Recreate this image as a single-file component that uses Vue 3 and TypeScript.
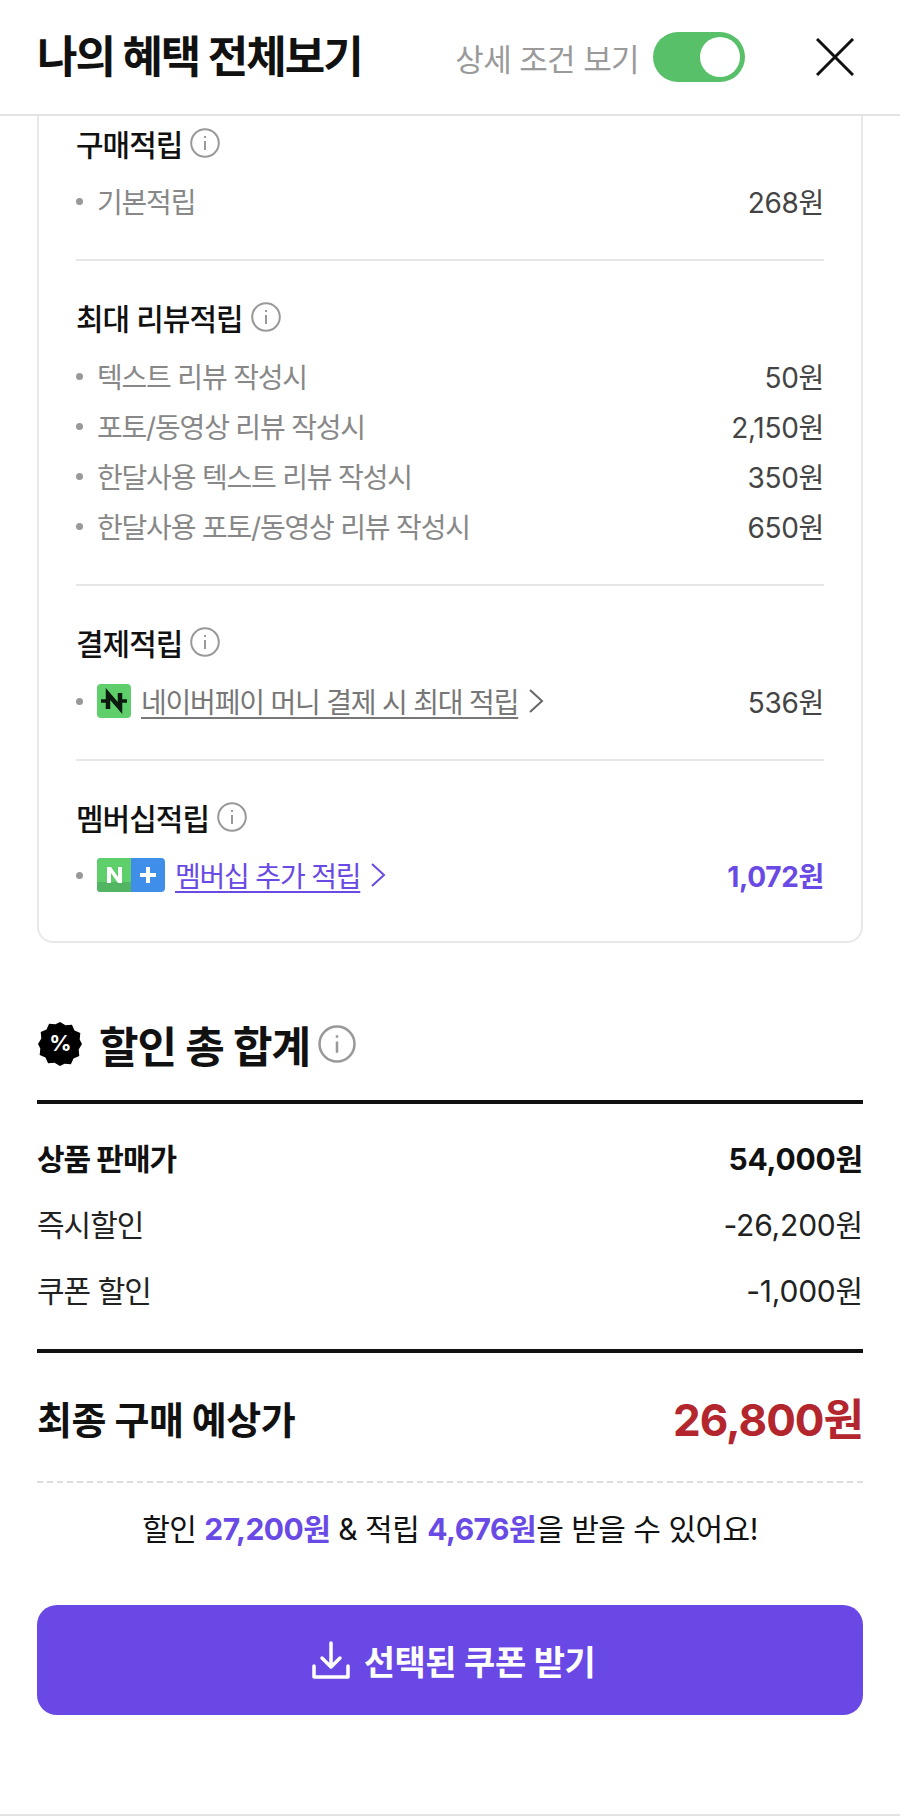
<script setup lang="ts">
interface Row { label: string; value: string }
const reviewRows: Row[] = [
  { label: '텍스트 리뷰 작성시', value: '50원' },
  { label: '포토/동영상 리뷰 작성시', value: '2,150원' },
  { label: '한달사용 텍스트 리뷰 작성시', value: '350원' },
  { label: '한달사용 포토/동영상 리뷰 작성시', value: '650원' },
]
</script>

<template>
  <div class="page">
    <header class="header">
      <h1 class="title">나의 혜택 전체보기</h1>
      <span class="toggle-label">상세 조건 보기</span>
      <span class="toggle"><span class="knob"></span></span>
      <svg class="close" width="38" height="38" viewBox="0 0 38 38" fill="none" stroke="#111" stroke-width="3"><path d="M1 1L37 37M37 1L1 37" /></svg>
    </header>

    <main class="content">
      <section class="card">
        <div class="group first">
          <h2 class="group-title">구매적립<svg class="info" viewBox="0 0 30 30"><circle cx="15" cy="15" r="13.8" /><path d="M15 13v9M15 8v2" /></svg></h2>
          <div class="row"><span class="dot"></span><span class="label">기본적립</span><span class="value">268원</span></div>
        </div>
        <div class="group">
          <h2 class="group-title">최대 리뷰적립<svg class="info" viewBox="0 0 30 30"><circle cx="15" cy="15" r="13.8" /><path d="M15 13v9M15 8v2" /></svg></h2>
          <div v-for="r in reviewRows" :key="r.label" class="row"><span class="dot"></span><span class="label">{{ r.label }}</span><span class="value">{{ r.value }}</span></div>
        </div>
        <div class="group">
          <h2 class="group-title">결제적립<svg class="info" viewBox="0 0 30 30"><circle cx="15" cy="15" r="13.8" /><path d="M15 13v9M15 8v2" /></svg></h2>
          <div class="row">
            <span class="dot"></span>
            <svg class="badge" width="34" height="34" viewBox="0 0 34 34"><rect width="34" height="34" rx="4" fill="#5fcf6c" /><path d="M4 17h7M23 17h7" fill="none" stroke="#0b1a0e" stroke-width="3.500" /><path d="M11 25V10l12 14V9" fill="none" stroke="#0b1a0e" stroke-width="4.500" /></svg>
            <a class="link gray">네이버페이 머니 결제 시 최대 적립</a>
            <svg class="chev" width="16" height="26" viewBox="0 0 16 26" fill="none" stroke="#666" stroke-width="2"><path d="M2 2l12 11L2 24" /></svg>
            <span class="value">536원</span>
          </div>
        </div>
        <div class="group last">
          <h2 class="group-title">멤버십적립<svg class="info" viewBox="0 0 30 30"><circle cx="15" cy="15" r="13.8" /><path d="M15 13v9M15 8v2" /></svg></h2>
          <div class="row">
            <span class="dot"></span>
            <svg class="badge" width="68" height="34" viewBox="0 0 68 34"><rect width="68" height="34" rx="4" fill="#3f8fe8" /><path d="M4 0h30v34H4a4 4 0 0 1-4-4V4a4 4 0 0 1 4-4z" fill="#5fcf6c" /><path d="M0 24h34v10H4a4 4 0 0 1-4-4z" fill="#52b561" /><path d="M10 25V9h4l7 10V9h4v16h-4l-7-10v10z" fill="#fff" /><path d="M51 9v16M43 17h16" stroke="#fff" stroke-width="4" fill="none" /></svg>
            <a class="link purple">멤버십 추가 적립</a>
            <svg class="chev" width="16" height="26" viewBox="0 0 16 26" fill="none" stroke="#6a4ae4" stroke-width="2"><path d="M2 2l12 11L2 24" /></svg>
            <span class="value strong-purple">1,072원</span>
          </div>
        </div>
      </section>

      <section class="summary">
        <h2 class="summary-title">
          <svg class="pct" width="46" height="46" viewBox="0 0 46 46">
            <path d="M23 1l5.5 3.3 6.4-.6 2.6 5.8 5.8 2.6-.6 6.4L45 23l-3.300 5.500.6 6.400-5.800 2.600-2.600 5.800-6.400-.6L23 45l-5.500-3.300-6.400.6-2.600-5.800-5.800-2.600.6-6.400L1 23l3.300-5.500-.6-6.400 5.800-2.600 2.600-5.800 6.400.6z" fill="#000" />
            <text x="23" y="30" text-anchor="middle" class="pct-text">%</text>
          </svg>
          <span>할인 총 합계</span>
          <svg class="info big" viewBox="0 0 30 30"><circle cx="15" cy="15" r="13.8" /><path d="M15 13v9M15 8v2" /></svg>
        </h2>
        <div class="price-table">
          <div class="price-row bold"><span>상품 판매가</span><span>54,000원</span></div>
          <div class="price-row"><span>즉시할인</span><span>-26,200원</span></div>
          <div class="price-row"><span>쿠폰 할인</span><span>-1,000원</span></div>
        </div>
        <div class="final"><span>최종 구매 예상가</span><span class="final-price">26,800원</span></div>
        <p class="note">할인 <b>27,200원</b> &amp; 적립 <b>4,676원</b>을 받을 수 있어요!</p>
        <button class="cta" type="button">
          <svg width="38" height="38" viewBox="0 0 38 38" fill="none" stroke="#fff" stroke-width="3.500" stroke-linecap="round" stroke-linejoin="round"><path d="M19 2v24M10 17l9 9 9-9M2 25v11h34V25" /></svg>
          <span>선택된 쿠폰 받기</span>
        </button>
      </section>
    </main>
    <div class="bottom-line"></div>
  </div>
</template>

<style scoped>
.page {
  width: 900px;
  height: 1816px;
  overflow: hidden;
  background: #fff;
  display: flex;
  flex-direction: column;
  font-family: "Inter", "Noto Sans CJK KR", "Noto Sans", sans-serif;
  color: #111;
  letter-spacing: -0.5px;
}
.header {
  height: 116px;
  flex: none;
  box-sizing: border-box;
  display: flex;
  align-items: center;
  padding: 0 37px;
  border-bottom: 2px solid #e3e3e3;
}
.title {
  margin: 0;
  flex: 1;
  font-size: 44px;
  font-weight: 700;
  letter-spacing: -2px;
  line-height: 1;
}
.toggle-label {
  font-size: 31px;
  color: #9a9a9a;
  letter-spacing: -0.6px;
  margin-right: 14px;
}
.toggle {
  width: 92px;
  height: 50px;
  border-radius: 25px;
  background: #58c069;
  display: flex;
  align-items: center;
  justify-content: flex-end;
  padding-right: 5px;
  box-sizing: border-box;
}
.knob {
  width: 40px;
  height: 40px;
  border-radius: 50%;
  background: #fff;
}
.close {
  margin-left: 71px;
  margin-right: 9px;
}
.content {
  flex: 1;
  padding: 0 37px;
}
.card {
  border: 2px solid #e8e8e8;
  border-top: 0;
  border-radius: 0 0 16px 16px;
  padding: 0 37px 0 37px;
  height: 827px;
  box-sizing: border-box;
}
.group {
  padding: 36px 0 33px;
  border-top: 2px solid #e6e6e6;
}
.group.first {
  border-top: 0;
  padding: 7px 0 33px;
}
.group.first .group-title {
  margin-bottom: 13px;
}
.group.last {
  padding-bottom: 0;
}
.group-title {
  margin: 0 0 14px;
  height: 40px;
  display: flex;
  align-items: center;
  font-size: 30px;
  font-weight: 500;
  letter-spacing: -1px;
}
.group.last .group-title {
  margin-bottom: 13px;
}
.info {
  width: 30px;
  height: 30px;
  margin-left: 8px;
  fill: none;
  stroke: #999;
  stroke-width: 2;
}
.info.big {
  width: 38px;
  height: 38px;
  margin-left: 8px;
}
.row {
  height: 50px;
  display: flex;
  align-items: center;
  font-size: 28px;
  letter-spacing: -1.2px;
}
.dot {
  width: 7px;
  height: 7px;
  border-radius: 50%;
  background: #999;
  margin-right: 14px;
  flex: none;
}
.label {
  color: #888;
  flex: 1;
}
.value {
  margin-left: auto;
  color: #444;
  letter-spacing: -0.3px;
}
.badge {
  flex: none;
  margin-right: 10px;
}
.link {
  text-decoration: underline;
  text-underline-offset: 4px;
}
.link.gray { color: #777; }
.link.purple { color: #6a4ae4; }
.chev { margin-left: 10px; flex: none; }
.strong-purple {
  color: #6a4ae4;
  font-weight: 700;
}
.summary {
  padding-top: 71px;
}
.summary-title {
  margin: 0;
  height: 60px;
  display: flex;
  align-items: center;
  font-size: 43px;
  font-weight: 700;
  letter-spacing: -1px;
}
.pct { margin-right: 16px; flex: none; }
.pct-text {
  fill: #fff;
  font-size: 22px;
  font-weight: 700;
}
.price-table {
  margin-top: 26px;
  padding: 20px 0 27px;
  border-top: 4px solid #111;
  border-bottom: 4px solid #111;
}
.price-row {
  height: 66px;
  display: flex;
  justify-content: space-between;
  align-items: center;
  font-size: 30px;
  color: #222;
}
.price-row span:first-child {
  letter-spacing: -1px;
}
.price-row span:last-child {
  letter-spacing: -0.2px;
}
.price-row.bold {
  font-weight: 700;
  color: #111;
}
.final {
  height: 130px;
  box-sizing: border-box;
  display: flex;
  justify-content: space-between;
  align-items: center;
  font-size: 38px;
  font-weight: 700;
  border-bottom: 2px dashed #ddd;
}
.final-price {
  color: #b3262e;
  font-size: 44px;
  letter-spacing: -1px;
}
.note {
  margin: 0;
  height: 88px;
  display: flex;
  align-items: center;
  justify-content: center;
  white-space: pre-wrap;
  font-size: 30px;
  color: #111;
}
.note b {
  color: #6a4ae4;
  font-weight: 700;
}
.cta {
  margin-top: 34px;
  width: 100%;
  height: 110px;
  border: 0;
  border-radius: 20px;
  background: #6a48e6;
  color: #fff;
  font-family: inherit;
  font-size: 34px;
  font-weight: 600;
  letter-spacing: -0.5px;
  padding: 0 0 0 7px;
  display: flex;
  align-items: center;
  justify-content: center;
  gap: 14px;
}
.bottom-line {
  height: 2px;
  flex: none;
  background: #e3e3e3;
}
</style>
